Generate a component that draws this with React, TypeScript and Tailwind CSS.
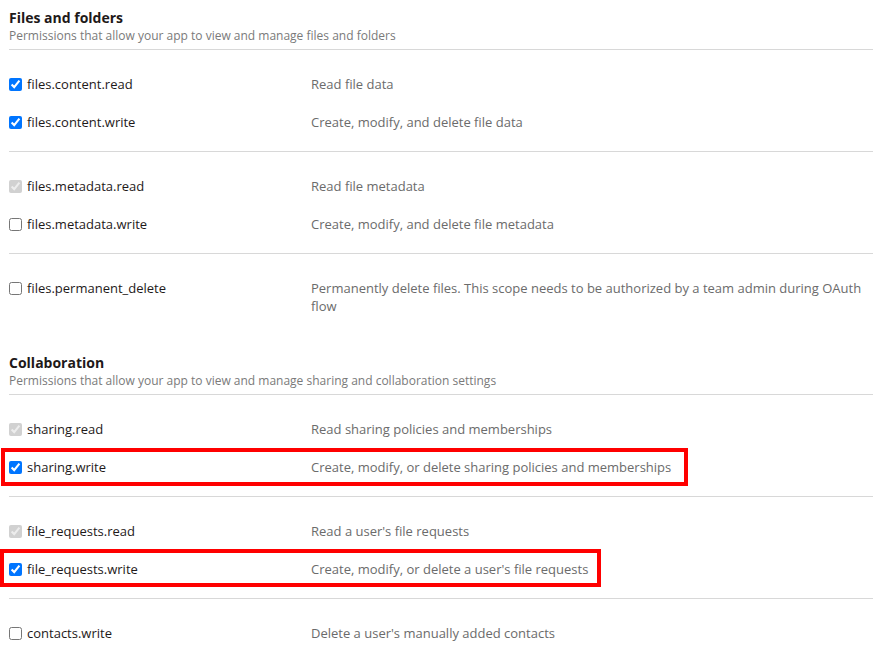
type Scope = {
  name: string;
  desc: string;
  checked?: boolean;
  disabled?: boolean;
  box?: "a" | "b";
};

type Section = {
  title: string;
  subtitle: string;
  groups: Scope[][];
};

const sections: Section[] = [
  {
    title: "Files and folders",
    subtitle: "Permissions that allow your app to view and manage files and folders",
    groups: [
      [
        { name: "files.content.read", desc: "Read file data", checked: true },
        { name: "files.content.write", desc: "Create, modify, and delete file data", checked: true },
      ],
      [
        { name: "files.metadata.read", desc: "Read file metadata", checked: true, disabled: true },
        { name: "files.metadata.write", desc: "Create, modify, and delete file metadata" },
      ],
      [
        {
          name: "files.permanent_delete",
          desc: "Permanently delete files. This scope needs to be authorized by a team admin during OAuth flow",
        },
      ],
    ],
  },
  {
    title: "Collaboration",
    subtitle: "Permissions that allow your app to view and manage sharing and collaboration settings",
    groups: [
      [
        { name: "sharing.read", desc: "Read sharing policies and memberships", checked: true, disabled: true },
        {
          name: "sharing.write",
          desc: "Create, modify, or delete sharing policies and memberships",
          checked: true,
          box: "a",
        },
      ],
      [
        { name: "file_requests.read", desc: "Read a user's file requests", checked: true, disabled: true },
        {
          name: "file_requests.write",
          desc: "Create, modify, or delete a user's file requests",
          checked: true,
          box: "b",
        },
      ],
      [{ name: "contacts.write", desc: "Delete a user's manually added contacts" }],
    ],
  },
];

function ScopeRow({ scope }: { scope: Scope }) {
  return (
    <div className="relative flex items-start py-[10px] text-[13px] leading-[18px]">
      <label className="flex w-[302px] shrink-0 items-start text-[#1e1919]">
        <input
          type="checkbox"
          defaultChecked={scope.checked}
          disabled={scope.disabled}
          className="mt-[3px] mr-[5px] h-[13px] w-[13px] shrink-0"
        />
        <span>{scope.name}</span>
      </label>
      <div className="flex-1 text-[#6b6b6b]">{scope.desc}</div>
      {scope.box === "a" && (
        <div className="pointer-events-none absolute top-0 left-[-8px] h-[38px] w-[687px] border-4 border-[#ff0000]" />
      )}
      {scope.box === "b" && (
        <div className="pointer-events-none absolute top-[-1px] left-[-9px] h-[38px] w-[601px] border-4 border-[#ff0000]" />
      )}
    </div>
  );
}

export default function App() {
  return (
    <div className="min-h-screen bg-white pl-[9px] pr-[15px] font-['Open_Sans',sans-serif]">
      {sections.map((section, si) => (
        <section key={section.title} className={si === 0 ? "pt-[8px]" : "pt-[18px]"}>
          <div className="border-b border-[#d8d8d8] pb-[5px]">
            <h2 className="text-[14px] leading-[20px] font-bold text-[#1e1919]">{section.title}</h2>
            <p className="text-[12px] leading-[16px] text-[#7a7a7a]">{section.subtitle}</p>
          </div>
          {section.groups.map((group, gi) => (
            <div
              key={gi}
              className={
                gi < section.groups.length - 1
                  ? "border-b border-[#d8d8d8] pt-[15px] pb-[10px]"
                  : "pt-[15px] pb-[10px]"
              }
            >
              {group.map((scope) => (
                <ScopeRow key={scope.name} scope={scope} />
              ))}
            </div>
          ))}
        </section>
      ))}
    </div>
  );
}
